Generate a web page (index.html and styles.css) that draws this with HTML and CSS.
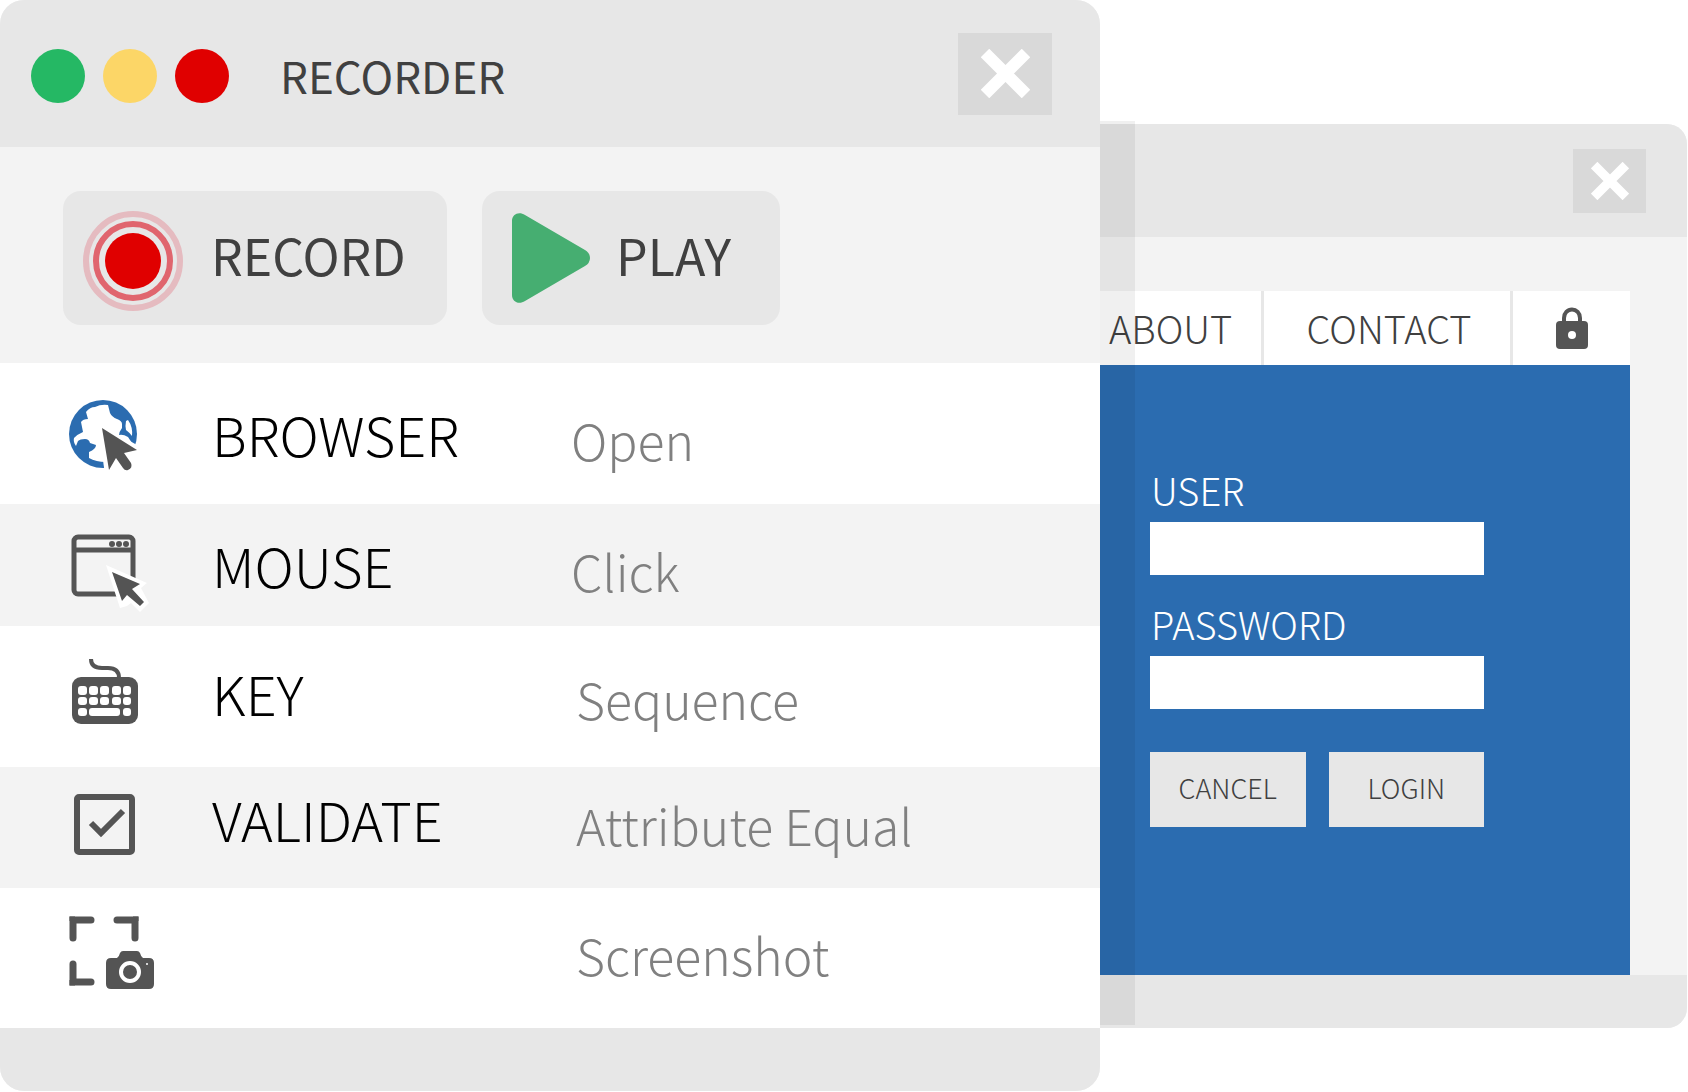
FILE: index.html
```html
<!DOCTYPE html>
<html lang="en">
<head>
<meta charset="utf-8">
<title>Recorder</title>
<link rel="stylesheet" href="styles.css">
</head>
<body>
<main class="stage">
  <section class="recorder">
    <header class="recorder-bar">
      <div class="dots">
        <span class="dot dot-green"></span>
        <span class="dot dot-yellow"></span>
        <span class="dot dot-red"></span>
      </div>
      <h1 class="title">RECORDER</h1>
      <button class="close" type="button" aria-label="Close recorder">
        <svg class="close-icon" viewBox="0 0 49 49"><path d="M4 4L45 45M45 4L4 45" stroke="#fff" stroke-width="12"/></svg>
      </button>
    </header>
    <div class="toolbar">
      <button class="tool tool-record" type="button">
        <svg class="record-icon" viewBox="0 0 100 106"><circle cx="50" cy="56" r="47" fill="none" stroke="#e5bbc0" stroke-width="6"/><circle cx="50" cy="56" r="37" fill="none" stroke="#e0656e" stroke-width="6"/><circle cx="50" cy="56" r="28" fill="#e00000"/></svg>
        <span class="tool-name">RECORD</span>
      </button>
      <button class="tool tool-play" type="button">
        <svg class="play-icon" viewBox="0 0 78 90"><path d="M0 8C0 1 7-2 13 2L73 37Q78 40 78 45T73 53L13 88C7 92 0 89 0 82Z" fill="#46ae71"/></svg>
        <span class="tool-name">PLAY</span>
      </button>
    </div>
    <ul class="steps">
      <li class="step">
        <svg class="step-icon" viewBox="0 -6 90 80"><circle cx="34" cy="34" r="34" fill="#2b6cb0"/><path d="M17 12Q21 7 26 7Q32 4 39 5L41 13Q43 17 48 19Q53 21 53 24L53 28Q50 32 50 35Q54 34 59 37L63 43L60 66H37V62Q27 62 20 58L20 52Q27 49 27 45Q24 44 21 43Q20 39 16 39Q11 39 9 41L7 46Q4 42 5 38Q9 34 14 32L12 22Q14 19 19 19ZM59 20Q64 27 63 36Q61 33 57 30Q56 26 57 21Z" fill="#fff"/><path d="M29 23L68 45V75H36Z" fill="#fff"/><path d="M33 28L68 50L55 53L62 63Q64 68 59 70Q56 71 54 68L47 58L40 70Z" fill="#545454"/></svg>
        <span class="step-name">BROWSER</span><span class="step-action">Open</span>
      </li>
      <li class="step step-alt step-mouse">
        <svg class="step-icon" viewBox="0 -9 90 80"><rect x="5" y="3" width="59" height="57" rx="4" fill="none" stroke="#545454" stroke-width="5"/><path d="M4 16H65" stroke="#545454" stroke-width="5"/><g fill="#545454"><circle cx="43" cy="10" r="3"/><circle cx="50" cy="10" r="3"/><circle cx="57" cy="10" r="3"/></g><path d="M37 31L78 49L72 54L80 69L71 78L62 69L58 72L51 74Z" fill="#fff"/><path d="M43 38L71 50L63 55L75 68L71 72L58 61L53 67Z" fill="#545454"/></svg>
        <span class="step-name">MOUSE</span><span class="step-action">Click</span>
      </li>
      <li class="step step-wide step-key">
        <svg class="step-icon" viewBox="0 -2 90 80"><path d="M22 4Q22 13 33 13H39Q50 13 50 23" fill="none" stroke="#545454" stroke-width="4"/><rect x="3" y="22" width="66" height="47" rx="9" fill="#545454"/><g fill="#fff"><rect x="9" y="31" width="9" height="9" rx="3"/><rect x="20" y="31" width="9" height="9" rx="3"/><rect x="31" y="31" width="9" height="9" rx="3"/><rect x="43" y="31" width="9" height="9" rx="3"/><rect x="54" y="31" width="8" height="9" rx="3"/><rect x="9" y="42" width="9" height="8" rx="3"/><rect x="20" y="42" width="9" height="8" rx="3"/><rect x="31" y="42" width="9" height="8" rx="3"/><rect x="43" y="42" width="9" height="8" rx="3"/><rect x="54" y="42" width="8" height="8" rx="3"/><rect x="9" y="53" width="9" height="8" rx="3"/><rect x="20" y="53" width="31" height="8" rx="3"/><rect x="54" y="53" width="8" height="8" rx="3"/></g></svg>
        <span class="step-name">KEY</span><span class="step-action">Sequence</span>
      </li>
      <li class="step step-alt step-wide step-raised">
        <svg class="step-icon" viewBox="0 -9 90 80"><rect x="8" y="9" width="55" height="55" rx="2" fill="none" stroke="#545454" stroke-width="6"/><path d="M22 35L32 45L54 23" fill="none" stroke="#545454" stroke-width="6"/></svg>
        <span class="step-name">VALIDATE</span><span class="step-action">Attribute Equal</span>
      </li>
      <li class="step step-wide step-raised">
        <svg class="step-icon" viewBox="0 -3 90 80"><g fill="none" stroke="#545454" stroke-width="7" stroke-linecap="round"><path d="M22 8H4V26M48 8H66V26M4 52V70H22"/></g><path d="M.5 4.500H6V9H.5ZM64 4.500H69.500V9H64ZM.5 68H6V73.500H.5Z" fill="#545454"/><path d="M42 46H48Q50 45 51 41Q52 39 54 39H68Q70 39 71 41Q72 45 74 46H80Q85 46 85 51V72Q85 77 80 77H42Q37 77 37 72V51Q37 46 42 46Z" fill="#545454"/><circle cx="61" cy="60" r="9" fill="none" stroke="#fff" stroke-width="4"/><circle cx="78" cy="52" r="1" fill="#fff"/></svg>
        <span class="step-name"></span><span class="step-action">Screenshot</span>
      </li>
    </ul>
    <footer class="recorder-foot"></footer>
  </section>
  <section class="site">
    <header class="site-bar">
      <button class="close close-small" type="button" aria-label="Close site">
        <svg class="close-icon" viewBox="0 0 49 49"><path d="M4 4L45 45M45 4L4 45" stroke="#fff" stroke-width="12"/></svg>
      </button>
    </header>
    <div class="page">
      <nav class="nav">
        <a class="nav-link nav-about" href="#about">ABOUT</a>
        <a class="nav-link nav-contact" href="#contact">CONTACT</a>
        <a class="nav-link nav-lock" href="#login" aria-label="Log in"><svg class="lock-icon" viewBox="0 0 32 42"><path d="M8 16V11A8 8.500 0 0 1 24 11V16" fill="none" stroke="#545454" stroke-width="4"/><rect y="14" width="32" height="28" rx="4" fill="#545454"/><circle cx="16" cy="28" r="4" fill="#fff"/></svg></a>
      </nav>
      <form class="login">
        <label class="label" for="user">USER</label>
        <input class="field" id="user" type="text">
        <label class="label" for="password">PASSWORD</label>
        <input class="field" id="password" type="password">
        <div class="actions">
          <button class="action" type="button">CANCEL</button>
          <button class="action" type="button">LOGIN</button>
        </div>
      </form>
    </div>
    <footer class="site-foot"></footer>
  </section>
</main>
</body>
</html>
```
FILE: styles.css
```css
* { box-sizing: border-box; }

body {
  margin: 0;
  background: #fff;
  color: #404040;
  font-family: "Noto Sans CJK SC", "Noto Sans", sans-serif;
}

button {
  border: 0;
  padding: 0;
  color: inherit;
  font: inherit;
}

svg { display: block; flex: none; }

.stage {
  display: grid;
  grid-template-columns: 1100fr 587fr;
  align-items: start;
  padding-right: 1px;
}

.recorder {
  overflow: hidden;
  border-radius: 24px;
  background: #f3f3f3;
}

.recorder-bar {
  display: flex;
  align-items: center;
  height: 147px;
  padding: 0 48px 0 31px;
  background: #e7e7e7;
}

.dots {
  display: flex;
  gap: 18px;
  padding-top: 5px;
}

.dot {
  width: 54px;
  height: 54px;
  border-radius: 50%;
}

.dot-green { background: #25b864; }
.dot-yellow { background: #fcd667; }
.dot-red { background: #e00000; }

.title {
  margin: 0 auto 0 51px;
  padding-top: 2px;
  font-size: 44px;
  font-weight: 400;
  line-height: 60px;
}

.close {
  display: grid;
  place-items: center;
  width: 94px;
  height: 82px;
  background: #d9d9d9;
}

.close-icon { width: 49px; height: 49px; }

.toolbar {
  display: flex;
  gap: 35px;
  padding: 44px 63px 38px;
}

.tool {
  display: flex;
  align-items: center;
  height: 134px;
  border-radius: 18px;
  background: #e7e7e7;
  font-size: 50px;
  line-height: 72px;
}

.tool-name { padding-bottom: 8px; }
.tool-record { gap: 28px; width: 384px; padding-left: 20px; }
.tool-play { gap: 26px; width: 298px; padding-left: 30px; }
.record-icon { width: 100px; height: 106px; }
.play-icon { width: 78px; height: 90px; }

.steps {
  margin: 0;
  padding: 0;
  list-style: none;
}

.step {
  display: grid;
  grid-template-columns: 143px 359px 1fr;
  align-items: center;
  height: 141px;
  padding-left: 69px;
  background: #fff;
  font-size: 54px;
  font-weight: 300;
  line-height: 80px;
}

.step-wide { grid-template-columns: 143px 364px 1fr; }
.step-raised { height: 140px; padding-bottom: 18px; }
.step-alt { height: 121px; background: #f3f3f3; }
.step-mouse { height: 122px; }
.step-key { padding-bottom: 8px; }
.step-icon { overflow: visible; width: 90px; height: 80px; }
.step-name { color: #000; }
.step-action { padding-top: 10px; color: #808080; font-size: 50px; }
.recorder-foot { height: 63px; background: #e7e7e7; }

.site {
  position: relative;
  margin-top: 124px;
  background: #f3f3f3;
  border-radius: 0 20px 20px 0;
}

.site::before {
  content: "";
  position: absolute;
  top: -3px;
  bottom: 3px;
  left: 0;
  width: 35px;
  background: rgba(0, 0, 0, 0.06);
}

.site-bar {
  display: flex;
  align-items: center;
  justify-content: flex-end;
  height: 113px;
  padding: 0 41px 0 0;
  border-radius: 0 20px 0 0;
  background: #e7e7e7;
}

.close-small { width: 73px; height: 64px; }
.close-small .close-icon { width: 38px; height: 38px; }

.page { padding: 54px 57px 0 0; }

.nav {
  display: grid;
  grid-template-columns: 161fr 249fr 120fr;
  height: 74px;
  background: #fff;
}

.nav-link {
  display: flex;
  align-items: center;
  justify-content: center;
  color: #404040;
  font-size: 38px;
  font-weight: 300;
  line-height: 56px;
  text-decoration: none;
}

.nav-link + .nav-link { border-left: 3px solid #e7e7e7; }
.nav-about { justify-content: flex-start; padding-left: 9px; }
.nav-contact { padding-left: 4px; }
.lock-icon { width: 32px; height: 42px; }

.login {
  display: flex;
  flex-direction: column;
  height: 610px;
  padding: 100px 146px 0 50px;
  background: #2b6cb0;
}

.label {
  height: 57px;
  padding-left: 1px;
  color: #fff;
  font-size: 38px;
  font-weight: 300;
  line-height: 50px;
}

.field {
  width: 100%;
  height: 53px;
  margin-bottom: 24px;
  padding: 0 12px;
  border: 0;
  background: #fff;
  font-size: 27px;
}

.actions {
  display: grid;
  grid-template-columns: 1fr 1fr;
  gap: 23px;
  margin-top: 19px;
}

.action {
  height: 75px;
  padding-bottom: 4px;
  background: #e7e7e7;
  font-size: 27px;
  font-weight: 300;
}

.site-foot {
  height: 53px;
  border-radius: 0 0 20px 0;
  background: #e7e7e7;
}
```
